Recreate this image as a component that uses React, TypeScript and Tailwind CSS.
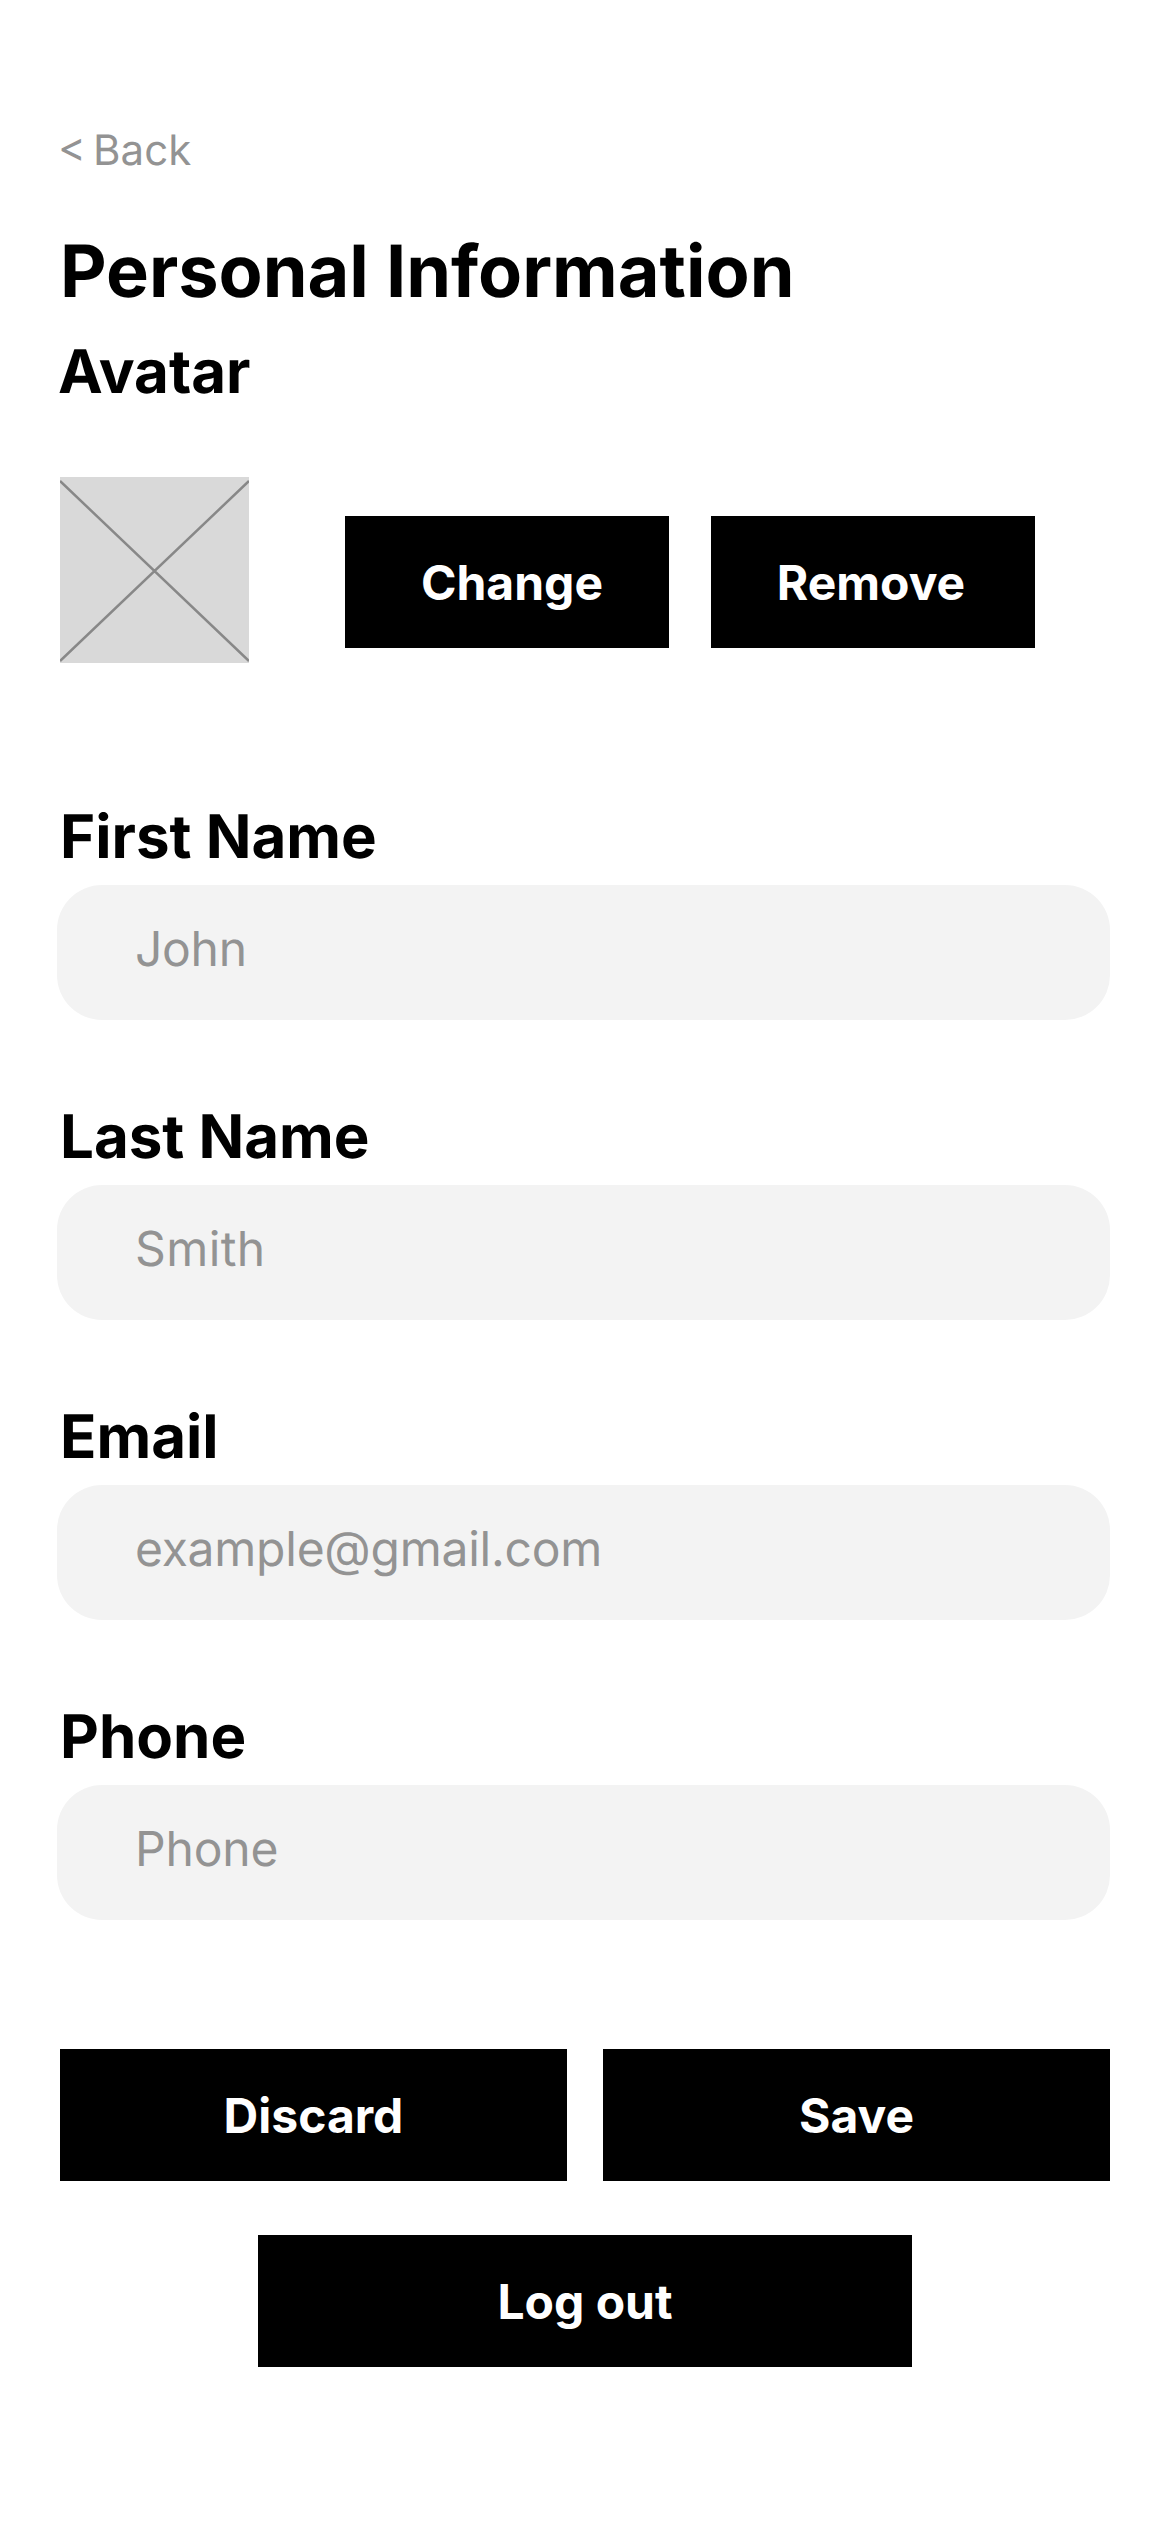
const fields = [
  { label: "First Name", value: "John", tracking: "tracking-[-0.3px]" },
  { label: "Last Name", value: "Smith", tracking: "tracking-[0.4px]" },
  { label: "Email", value: "example@gmail.com", tracking: "tracking-[-0.25px]" },
  { label: "Phone", value: "Phone", tracking: "tracking-[-0.15px]" },
];

const button =
  "flex items-center justify-center bg-black pt-[2px] text-[48px] leading-[58px] font-bold text-white";

export default function App() {
  return (
    <main className="h-[2532px] w-[1170px] overflow-hidden bg-white px-[60px] pt-[122px] font-['Inter',sans-serif] text-black [text-rendering:geometricPrecision]">
      <a className="-ml-[2px] block h-[58px] w-fit text-[42px] leading-[58px] text-[#939393] [word-spacing:-4.5px]">&lt; Back</a>
      <h1 className="mt-[48px] h-[87px] text-[72px] leading-[87px] font-bold">Personal Information</h1>
      <h2 className="-ml-[2px] mt-[21px] h-[73px] text-[60px] leading-[73px] font-bold">Avatar</h2>
      <section className="mt-[68px] flex h-[186px]">
        <svg className="h-[186px] w-[189px] bg-[#d9d9d9]" viewBox="0 0 189 186" fill="none" stroke="#888888" strokeWidth="2.5">
          <path d="M0 4 189 184M189 4 0 184" />
        </svg>
        <button className={`${button} mt-[39px] ml-[96px] h-[132px] w-[324px] pl-[10px]`}>Change</button>
        <button className={`${button} mt-[39px] ml-[42px] h-[132px] w-[324px] pr-[4px]`}>Remove</button>
      </section>
      <form className="mt-[138px]">
        {fields.map((field) => (
          <div key={field.label} className="h-[300px]">
            <label className="block h-[84px] text-[60px] leading-[73px] font-bold">{field.label}</label>
            <div
              className={`${field.tracking} -ml-[3px] h-[135px] w-[1053px] rounded-[45px] bg-[#f3f3f3] pt-[35px] pl-[78px] text-[48px] leading-[58px] text-[#939393]`}
            >
              {field.value}
            </div>
          </div>
        ))}
      </form>
      <div className="mt-[48px] flex justify-between">
        <button className={`${button} h-[132px] w-[507px]`}>Discard</button>
        <button className={`${button} h-[132px] w-[507px]`}>Save</button>
      </div>
      <button className={`${button} mt-[54px] ml-[198px] h-[132px] w-[654px]`}>Log out</button>
    </main>
  );
}
